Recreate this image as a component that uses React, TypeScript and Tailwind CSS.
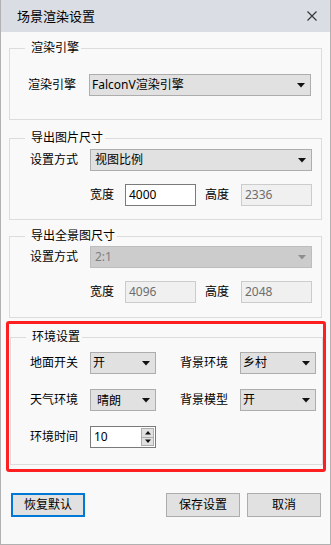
import React from 'react';

const font = "font-['Noto_Sans','Noto_Sans_CJK_SC',sans-serif]";

const Arrow = ({ disabled }: { disabled?: boolean }) => (
  <svg width="8" height="5" viewBox="0 0 8 5" className="shrink-0">
    <polygon points="0,0 8,0 4,4.5" fill={disabled ? '#8e8e8e' : '#111'} />
  </svg>
);

const Select = ({
  value,
  className,
  disabled,
  textClass = 'pl-[2px]',
}: {
  value: string;
  className: string;
  disabled?: boolean;
  textClass?: string;
}) => (
  <div
    className={`flex h-[22px] items-center justify-between border pr-[5px] ${className} ${
      disabled ? 'border-[#bdbdbd] bg-[#cccccc] text-[#7f7f7f]' : 'border-[#adadad] bg-[#e1e1e1] text-black'
    }`}
  >
    <span className={`text-[12px] leading-[16px] ${textClass}`}>{value}</span>
    <Arrow disabled={disabled} />
  </div>
);

const Input = ({ value, disabled }: { value: string; disabled?: boolean }) => (
  <div
    className={`flex h-[22px] w-[71px] items-center border px-[3px] text-[12px] leading-[16px] ${
      disabled ? 'border-[#cccccc] bg-[#f0f0f0] text-[#6d6d6d]' : 'border-[#7a7a7a] bg-white text-black'
    }`}
  >
    {value}
  </div>
);

const Group = ({
  title,
  className,
  children,
}: {
  title: string;
  className: string;
  children: React.ReactNode;
}) => (
  <fieldset className={`border border-[#dcdcdc] p-0 ${className}`}>
    <legend className="ml-[15px] pl-[6px] pr-[2px] text-[12px] leading-[16px] text-black">{title}</legend>
    {children}
  </fieldset>
);

const SizeRow = ({ w, h, disabled }: { w: string; h: string; disabled?: boolean }) => (
  <div className="flex items-center pl-[60px]">
    <span className="w-[35px] text-[12px] leading-[16px]">宽度</span>
    <Input value={w} disabled={!!disabled} />
    <span className="ml-[9px] w-[36px] text-[12px] leading-[16px]">高度</span>
    <Input value={h} disabled />
  </div>
);

const Btn = ({ label, primary }: { label: string; primary?: boolean }) => (
  <button
    className={`flex h-[24px] w-[74px] items-center justify-center bg-[#e1e1e1] text-[12px] leading-[16px] text-black ${
      primary ? 'border-2 border-[#0078d7]' : 'border border-[#adadad]'
    }`}
  >
    {label}
  </button>
);

export default function App() {
  return (
    <div className={`flex h-[545px] w-[331px] flex-col border-x border-b border-[#b1b1b1] bg-[#f9f9f9] ${font}`}>
      {/* title bar */}
      <div className="flex h-[32px] shrink-0 items-center justify-between bg-[#dadee4] pl-[16px] pr-[13px]">
        <span className="text-[13px] leading-[18px] text-black">场景渲染设置</span>
        <svg width="10" height="10" viewBox="0 0 10 10">
          <path d="M0.5 0.5 L9.5 9.5 M9.5 0.5 L0.5 9.5" stroke="#333" strokeWidth="1.1" />
        </svg>
      </div>

      <Group title="渲染引擎" className="mx-[8px] mt-[8px] h-[80px]">
        <div className="flex items-center pl-[18px] pt-[18px]">
          <span className="w-[61px] text-[12px] leading-[16px]">渲染引擎</span>
          <Select value="FalconV渲染引擎" className="w-[222px]" />
        </div>
      </Group>

      <Group title="导出图片尺寸" className="mx-[8px] mt-[10px] h-[90px]">
        <div className="flex flex-col gap-[13px] pl-[20px] pt-[3px]">
          <div className="flex items-center">
            <span className="w-[60px] text-[12px] leading-[16px]">设置方式</span>
            <Select value="视图比例" className="w-[222px]" textClass="pl-[4px]" />
          </div>
          <SizeRow w="4000" h="2336" />
        </div>
      </Group>

      <Group title="导出全景图尺寸" className="mx-[8px] mt-[8px] h-[90px]">
        <div className="flex flex-col gap-[13px] pl-[20px] pt-[2px]">
          <div className="flex items-center">
            <span className="w-[60px] text-[12px] leading-[16px]">设置方式</span>
            <Select value="2:1" className="w-[222px]" textClass="pl-[4px]" disabled />
          </div>
          <SizeRow w="4096" h="2048" disabled />
        </div>
      </Group>

      {/* highlighted environment section */}
      <div className="ml-[5px] mr-[4px] mt-[3px] rounded-[3px] border-[3px] border-[#fe2020] pb-[4px] pl-[1px] pt-[5px]">
        <Group title="环境设置" className="h-[136px]">
          <div className="flex flex-col gap-[15px] pl-[19px] pt-[7px]">
            <div className="flex items-center">
              <span className="w-[60px] text-[12px] leading-[16px]">地面开关</span>
              <Select value="开" className="w-[66px]" />
              <span className="ml-[24px] w-[60px] text-[12px] leading-[16px]">背景环境</span>
              <Select value="乡村" className="w-[76px]" />
            </div>
            <div className="flex items-center">
              <span className="w-[60px] text-[12px] leading-[16px]">天气环境</span>
              <Select value="晴朗" className="w-[66px]" textClass="pl-[6px] pt-[1px]" />
              <span className="ml-[24px] w-[60px] text-[12px] leading-[16px]">背景模型</span>
              <Select value="开" className="w-[76px]" />
            </div>
            <div className="flex items-center">
              <span className="w-[60px] text-[12px] leading-[16px]">环境时间</span>
              <div className="flex h-[22px] w-[66px] items-center justify-between border border-[#7a7a7a] bg-white pl-[3px] pr-[1px]">
                <span className="text-[12px] leading-[16px]">10</span>
                <div className="flex h-[18px] w-[13px] flex-col">
                  <div className="flex flex-1 items-center justify-center border border-[#adadad] bg-[#e1e1e1]">
                    <svg width="6" height="4" viewBox="0 0 6 4">
                      <polygon points="3,0 6,3.5 0,3.5" fill="#111" />
                    </svg>
                  </div>
                  <div className="flex flex-1 items-center justify-center border border-t-0 border-[#adadad] bg-[#e1e1e1]">
                    <svg width="6" height="4" viewBox="0 0 6 4">
                      <polygon points="0,0.5 6,0.5 3,4" fill="#111" />
                    </svg>
                  </div>
                </div>
              </div>
            </div>
          </div>
        </Group>
      </div>

      <div className="mt-[21px] flex items-center pl-[10px] pr-[9px]">
        <Btn label="恢复默认" primary />
        <div className="ml-auto flex gap-[7px]">
          <Btn label="保存设置" />
          <Btn label="取消" />
        </div>
      </div>
    </div>
  );
}
